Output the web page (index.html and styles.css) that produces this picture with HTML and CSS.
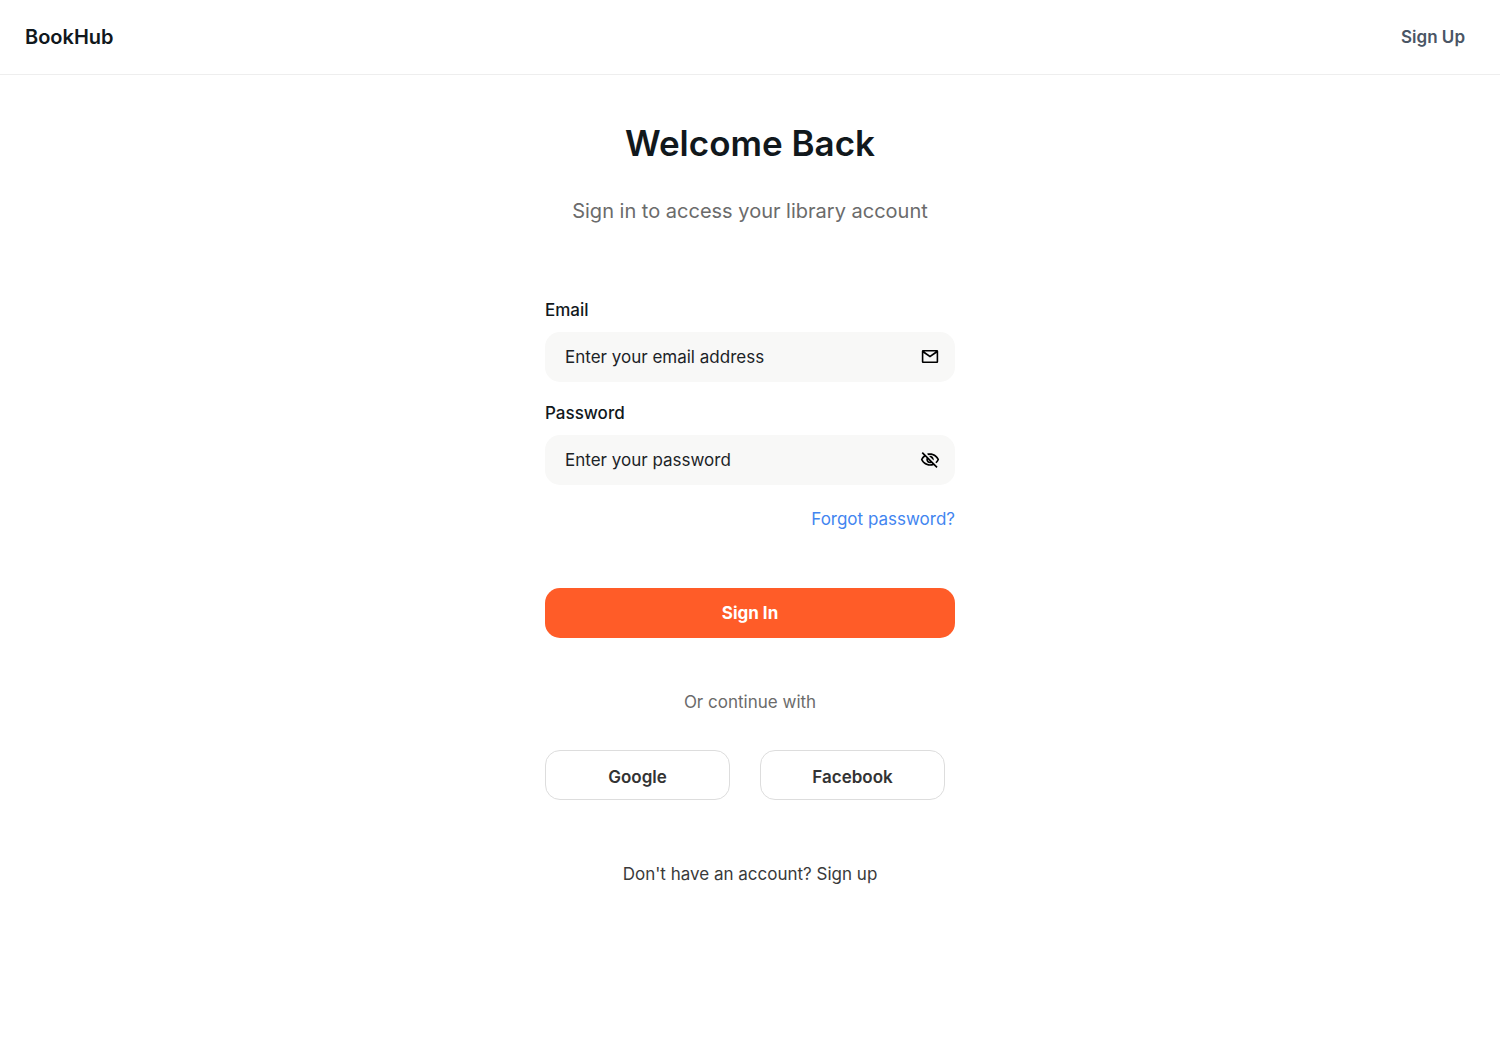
FILE: index.html
```html
<!DOCTYPE html>
<html lang="en">
<head>
<meta charset="utf-8">
<meta name="viewport" content="width=device-width, initial-scale=1">
<title>BookHub – Sign In</title>
<link rel="stylesheet" href="styles.css">
</head>
<body>
<header class="topbar">
  <a class="brand" href="#">BookHub</a>
  <a class="nav-link" href="#">Sign Up</a>
</header>
<main class="auth">
  <h1 class="title">Welcome Back</h1>
  <p class="subtitle">Sign in to access your library account</p>
  <form class="form">
    <label class="label" for="email">Email</label>
    <div class="field">
      <input class="input" id="email" type="email" placeholder="Enter your email address">
      <svg class="icon" viewBox="0 0 20 20" aria-hidden="true"><path fill-rule="evenodd" d="M3 3h14a1.200 1.200 0 0 1 1.200 1.200v10.600A1.200 1.200 0 0 1 17 16H3a1.200 1.200 0 0 1-1.200-1.200V4.200A1.200 1.200 0 0 1 3 3zm.4 3.100v8.300h13.200V6.100L10 10.600zM4.400 4.600L10 8.400l5.600-3.800z"/></svg>
    </div>
    <label class="label" for="password">Password</label>
    <div class="field">
      <input class="input" id="password" type="password" placeholder="Enter your password">
      <button class="toggle" type="button" aria-label="Show password">
        <svg class="icon" viewBox="0 0 24 24" aria-hidden="true"><path d="M12 6c3.790 0 7.170 2.130 8.820 5.500-.59 1.220-1.420 2.270-2.410 3.120l1.410 1.410c1.390-1.230 2.490-2.770 3.180-4.530C21.270 7.110 17 4 12 4c-1.270 0-2.490.2-3.640.57l1.650 1.650C10.660 6.090 11.320 6 12 6zm-1.070 1.140L13 9.210c.57.25 1.030.71 1.280 1.280l2.070 2.070c.08-.34.14-.7.14-1.070C16.500 9.010 14.480 7 12 7c-.37 0-.72.05-1.070.14zM2.010 3.870l2.680 2.680C3.060 7.830 1.770 9.530 1 11.500 2.730 15.890 7 19 12 19c1.520 0 2.980-.29 4.320-.82l3.420 3.420 1.410-1.410L3.420 2.450 2.010 3.870zm7.500 7.500l2.610 2.610c-.04.01-.08.02-.12.02-1.380 0-2.500-1.120-2.500-2.500 0-.05.01-.08.010-.13zm-3.400-3.400l1.750 1.750c-.23.55-.36 1.150-.36 1.780 0 2.480 2.020 4.500 4.500 4.500.63 0 1.230-.13 1.770-.36l.98.98c-.88.24-1.800.38-2.750.38-3.790 0-7.170-2.130-8.820-5.500.7-1.430 1.720-2.610 2.930-3.530z"/></svg>
      </button>
    </div>
    <a class="forgot" href="#">Forgot password?</a>
    <button class="submit" type="submit">Sign In</button>
  </form>
  <p class="divider">Or continue with</p>
  <div class="providers">
    <button class="provider" type="button">Google</button>
    <button class="provider" type="button">Facebook</button>
  </div>
  <p class="switch">Don't have an account? <a class="switch-link" href="#">Sign up</a></p>
</main>
</body>
</html>
```
FILE: styles.css
```css
* { box-sizing: border-box; }

body {
  margin: 0;
  background: #fff;
  color: #11181c;
  font-family: Inter, sans-serif;
  font-size: 17px;
  line-height: 24px;
}

a { color: inherit; text-decoration: none; }
button, input { font: inherit; color: inherit; }
button { cursor: pointer; }
h1, p { margin: 0; }

.topbar {
  display: flex;
  align-items: center;
  justify-content: space-between;
  padding: 24px 35px 24px 25px;
  border-bottom: 1px solid #eee;
  line-height: 26px;
}

.brand { font-size: 20px; font-weight: 600; }
.nav-link { color: #4a5565; font-weight: 600; }

.auth {
  width: 100%;
  max-width: 450px;
  margin: 0 auto;
  padding: 44px 20px;
  display: flex;
  flex-direction: column;
}

.title {
  font-size: 35px;
  font-weight: 600;
  line-height: 48px;
  text-align: center;
}

.subtitle {
  margin-top: 32px;
  color: #6b6b6b;
  font-size: 20px;
  text-align: center;
}

.form {
  display: flex;
  flex-direction: column;
  margin-top: 75px;
}

.label { margin-bottom: 10px; font-weight: 500; }

.field {
  display: flex;
  align-items: center;
  height: 50px;
  margin-bottom: 19px;
  padding: 0 15px 0 20px;
  border-radius: 15px;
  background: #f8f8f7;
}

.input {
  flex: 1;
  min-width: 0;
  padding: 0;
  border: 0;
  outline: 0;
  background: none;
}
.input::placeholder { color: #1c2327; opacity: 1; }

.icon { display: block; width: 20px; height: 20px; fill: #000; }
.toggle { padding: 0; border: 0; background: none; }

.forgot { align-self: flex-end; margin-top: 3px; color: #4285f0; }

.submit {
  height: 50px;
  margin-top: 57px;
  border: 0;
  border-radius: 15px;
  background: #ff5c28;
  color: #fff;
  font-weight: 700;
}

.divider { margin-top: 52px; color: #6b6b6b; text-align: center; }

.providers { display: flex; gap: 30px; margin-top: 36px; padding-right: 10px; }

.provider {
  flex: 1;
  height: 50px;
  padding: 3px 0 0;
  border: 1px solid #ddd;
  border-radius: 15px;
  background: #fff;
  color: #333;
  font-weight: 600;
}

.switch { margin-top: 62px; color: #3a3a3a; text-align: center; }
```
